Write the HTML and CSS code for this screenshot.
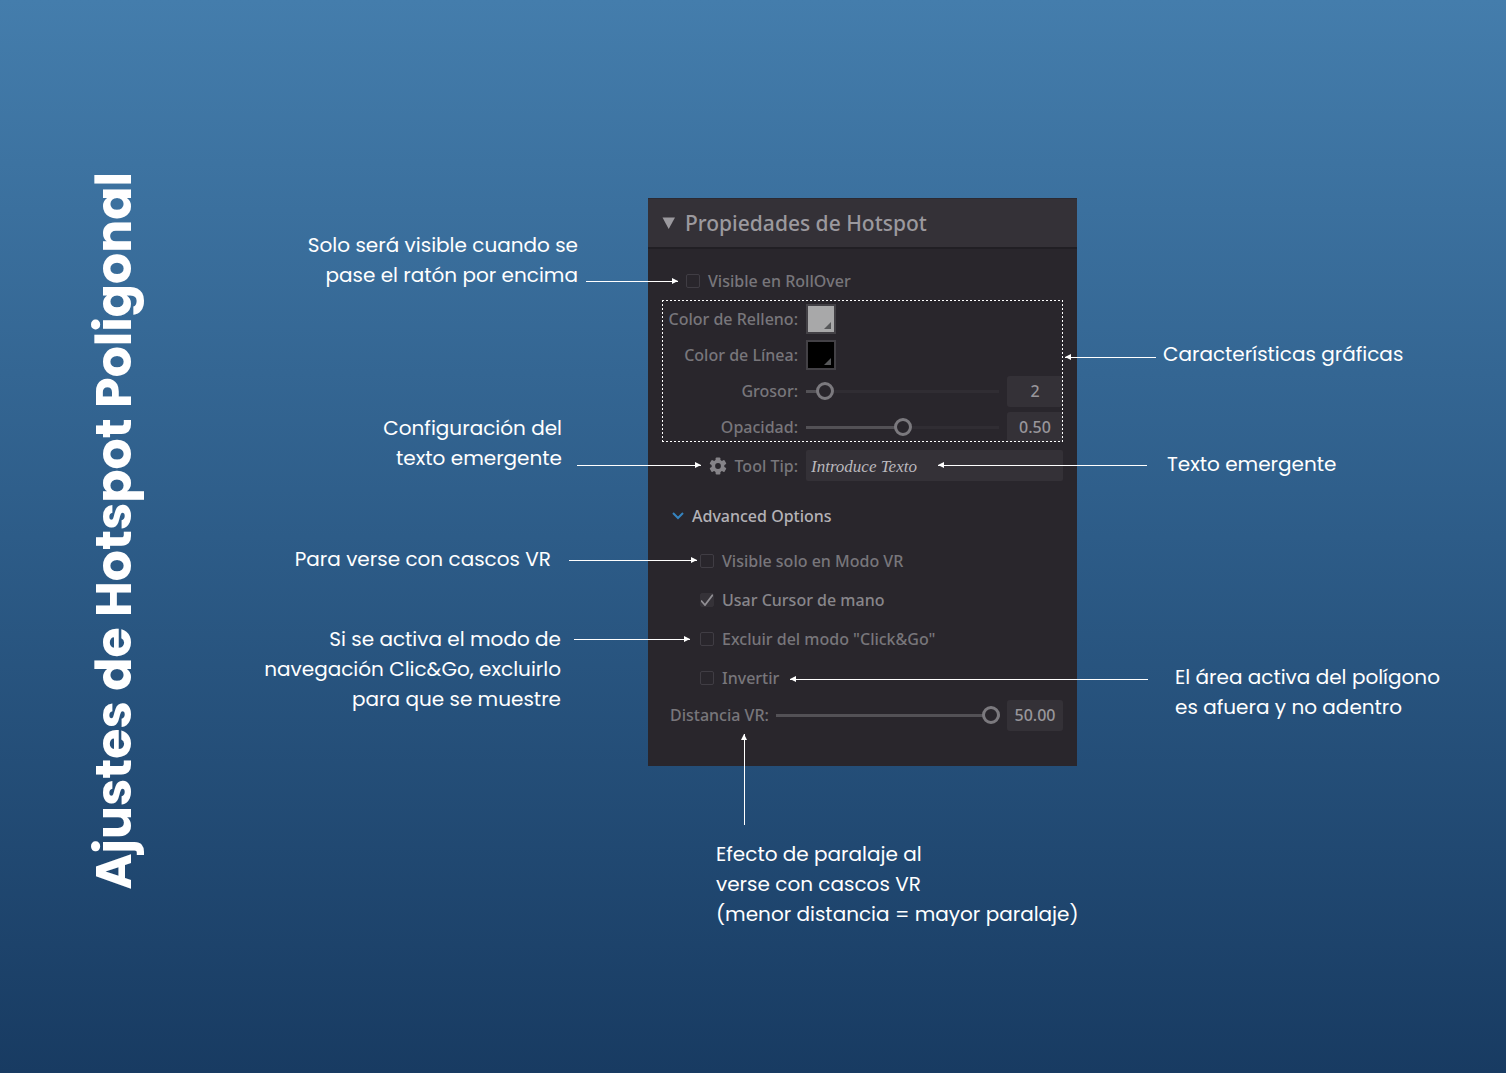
FILE: index.html
```
<!DOCTYPE html>
<html lang="es">
<head>
    <meta charset="UTF-8">
    <meta name="viewport" content="width=device-width, initial-scale=1.0">
    <title>Ajustes de Hotspot Poligonal</title>
    <link rel="stylesheet" href="styles.css">
</head>
<body>

    <main class="slide">
        <h1 class="title">Ajustes de Hotspot Poligonal</h1>

        <!-- Notas de la izquierda -->
        <div class="notes notes-left">
            <div class="note note-rollover">
                <p>Solo será visible cuando se<br>pase el ratón por encima</p>
                <span class="arrow arrow-right"></span>
            </div>
            <div class="note note-config">
                <p>Configuración del<br>texto emergente</p>
                <span class="arrow arrow-right"></span>
            </div>
            <div class="note note-vr">
                <p>Para verse con cascos VR</p>
                <span class="arrow arrow-right"></span>
            </div>
            <div class="note note-click">
                <p>Si se activa el modo de<br>navegación Clic&amp;Go, excluirlo<br>para que se muestre</p>
                <span class="arrow arrow-right"></span>
            </div>
        </div>

        <!-- Panel de propiedades -->
        <section class="panel">
            <h2 class="panel-header">
                <button type="button" class="panel-toggle">
                    <svg width="14" height="12" viewBox="0 0 14 12"><path d="M0.5 0.5h12.5L6.7 12z" fill="currentColor"/></svg>
                    Propiedades de Hotspot
                </button>
            </h2>
            <div class="panel-body">
                <label class="check check-rollover"><input type="checkbox">Visible en RollOver</label>

                <div class="graphics">
                    <div class="row">
                        <label for="fill">Color de Relleno:</label>
                        <button type="button" id="fill" class="swatch swatch-fill"></button>
                    </div>
                    <div class="row">
                        <label for="line">Color de Línea:</label>
                        <button type="button" id="line" class="swatch swatch-line"></button>
                    </div>
                    <div class="row">
                        <label for="width">Grosor:</label>
                        <input type="range" id="width" min="0" max="34" value="2" style="--value: 6%">
                        <input type="text" class="value" value="2" aria-label="Valor de grosor">
                    </div>
                    <div class="row">
                        <label for="opacity">Opacidad:</label>
                        <input type="range" id="opacity" min="0" max="1" step="0.01" value="0.5" style="--value: 50%">
                        <input type="text" class="value" value="0.50" aria-label="Valor de opacidad">
                    </div>
                </div>

                <div class="row row-tip">
                    <div class="tip-label">
                        <button type="button" class="gear" aria-label="Configurar">
                            <svg width="18" height="18" viewBox="0 0 18 18">
                                <g fill="currentColor">
                                    <rect x="6.6" y="0.5" width="4.8" height="17" rx="1"/>
                                    <rect x="6.6" y="0.5" width="4.8" height="17" rx="1" transform="rotate(60 9 9)"/>
                                    <rect x="6.6" y="0.5" width="4.8" height="17" rx="1" transform="rotate(120 9 9)"/>
                                    <circle cx="9" cy="9" r="6.4"/>
                                </g>
                                <circle cx="9" cy="9" r="2.9" fill="#29262c"/>
                            </svg>
                        </button>
                        <label for="tip">Tool Tip:</label>
                    </div>
                    <input type="text" id="tip" class="tip" placeholder="Introduce Texto">
                </div>

                <button type="button" class="advanced">
                    <svg width="12" height="8" viewBox="0 0 12 8"><path d="M1 1l5 5 5-5" fill="none" stroke="#3583bf" stroke-width="2"/></svg>
                    Advanced Options
                </button>

                <div class="options">
                    <label class="check"><input type="checkbox">Visible solo en Modo VR</label>
                    <label class="check check-on"><input type="checkbox" checked>Usar Cursor de mano</label>
                    <label class="check"><input type="checkbox">Excluir del modo "Click&amp;Go"</label>
                    <label class="check"><input type="checkbox">Invertir</label>
                </div>

                <div class="row-distance">
                    <label for="distance">Distancia VR:</label>
                    <input type="range" id="distance" min="0" max="50" value="50" style="--value: 100%">
                    <input type="text" class="value" value="50.00" aria-label="Valor de distancia">
                </div>
            </div>
        </section>

        <!-- Notas de la derecha -->
        <div class="notes notes-right">
            <div class="note note-graphics">
                <span class="arrow arrow-left"></span>
                <p>Características gráficas</p>
            </div>
            <div class="note note-text">
                <span class="arrow arrow-left"></span>
                <p>Texto emergente</p>
            </div>
            <div class="note note-invert">
                <span class="arrow arrow-left"></span>
                <p>El área activa del polígono<br>es afuera y no adentro</p>
            </div>
        </div>

        <div class="note-bottom">
            <span class="arrow-up"></span>
            <p>Efecto de paralaje al<br>verse con cascos VR<br>(menor distancia = mayor paralaje)</p>
        </div>
    </main>

</body>
</html>
```
FILE: styles.css
```
* {
    box-sizing: border-box;
}
body {
    margin: 0;
    min-height: 100vh;
    background: linear-gradient(#447dac, #2d5c88 50%, #183b62);
    color: #fff;
    font-family: Poppins, Inter, sans-serif;
    font-size: 20px;
    line-height: 30px;
}
p {
    margin: 0;
    white-space: nowrap;
}
button, input {
    margin: 0;
    padding: 0;
    border: none;
    background: none;
    color: inherit;
    font: inherit;
}
.slide {
    display: grid;
    grid-template-columns: 200px 1fr 429px 429px;
    grid-template-rows: auto auto;
    padding-top: 198px;
}

/* Título vertical */
.title {
    grid-row: 1 / 3;
    justify-self: center;
    align-self: start;
    margin: -26px 0 0;
    padding-right: 28px;
    writing-mode: vertical-rl;
    transform: rotate(180deg);
    font-size: 49px;
    font-weight: 700;
    line-height: 80px;
    white-space: nowrap;
}

/* Notas */
.note {
    display: flex;
}
.notes-left {
    padding-top: 32px;
    text-align: right;
}
.notes-left .note {
    justify-content: flex-end;
}
.notes-right {
    padding-top: 141px;
}
.notes-left,
.notes-right,
.note-bottom {
    z-index: 1;
    pointer-events: none;
}
.arrow {
    flex: none;
    position: relative;
    height: 1px;
    background: #fff;
}
.arrow::after,
.arrow-up::after {
    content: "";
    position: absolute;
    border: 3px solid transparent;
}
.arrow-right::after {
    right: 0;
    top: -3px;
    border-left: 6px solid #fff;
    border-right: none;
}
.arrow-left::after {
    left: 0;
    top: -3px;
    border-right: 6px solid #fff;
    border-left: none;
}
.note-rollover .arrow {
    width: 92px;
    margin: 51px -30px 0 8px;
}
.note-config {
    margin-top: 123px;
}
.note-config .arrow {
    width: 124px;
    margin: 52px -53px 0 15px;
}
.note-vr {
    margin-top: 71px;
}
.note-vr .arrow {
    width: 128px;
    margin: 16px -49px 0 18px;
}
.note-click {
    margin-top: 50px;
}
.note-click .arrow {
    width: 116px;
    margin: 15px -42px 0 13px;
}
.note-graphics .arrow {
    width: 91px;
    margin: 18px 7px 0 -12px;
}
.note-text {
    margin-top: 80px;
}
.note-text .arrow {
    width: 209px;
    margin: 16px 20px 0 -139px;
}
.note-invert {
    margin-top: 183px;
}
.note-invert .arrow {
    width: 358px;
    margin: 17px 27px 0 -287px;
}
.note-bottom {
    grid-column: 3;
    grid-row: 2;
    margin-top: -32px;
    padding-left: 68px;
}
.arrow-up {
    display: block;
    position: relative;
    width: 1px;
    height: 91px;
    margin: 0 0 14px 28px;
    background: #fff;
}
.arrow-up::after {
    left: -3px;
    top: 0;
    border-bottom: 6px solid #fff;
    border-top: none;
}

/* Panel */
.panel {
    background: #29262c;
    color: #78767b;
    font-family: "Segoe UI", "Noto Sans", sans-serif;
    font-size: 16px;
    font-weight: 500;
    line-height: 22px;
}
.panel-header {
    margin: 0;
    padding: 0 14px;
    background: #343137;
    border-top: 1px solid #2b2a33;
    border-bottom: 2px solid #211f24;
    font-size: 21px;
    font-weight: 500;
}
.panel-toggle {
    display: flex;
    align-items: center;
    gap: 9px;
    height: 48px;
    color: #9b999e;
}
.panel-body {
    padding: 12px 14px 33px;
}
.check {
    display: flex;
    align-items: center;
    gap: 8px;
    height: 39px;
}
.check-rollover {
    padding-left: 24px;
}
.check-on {
    color: #88868b;
}
input[type="checkbox"] {
    appearance: none;
    width: 14px;
    height: 14px;
    border: 1px solid #403d44;
    border-radius: 2px;
}
input[type="checkbox"]:checked {
    border-color: #353238;
    background: #353238 url("data:image/svg+xml,%3Csvg xmlns='http://www.w3.org/2000/svg' viewBox='0 0 14 14'%3E%3Cpath d='M1 7.5l4 4.5L13 1.5' fill='none' stroke='%23908e93' stroke-width='1.8'/%3E%3C/svg%3E") center / 14px;
}
.graphics {
    position: relative;
    height: 142px;
    overflow: hidden;
}
/* borde punteado por encima de los valores */
.graphics::after {
    content: "";
    position: absolute;
    inset: 0;
    background:
        repeating-linear-gradient(90deg, #fff 0 2px, transparent 2px 4px) top / 100% 1px no-repeat,
        repeating-linear-gradient(90deg, #fff 0 2px, transparent 2px 4px) bottom / 100% 1px no-repeat,
        repeating-linear-gradient(#fff 0 2px, transparent 2px 4px) left / 1px 100% no-repeat,
        repeating-linear-gradient(#fff 0 2px, transparent 2px 4px) right / 1px 100% no-repeat;
    pointer-events: none;
}
.row {
    display: grid;
    grid-template-columns: 136px 1fr 56px;
    align-items: center;
    column-gap: 8px;
    height: 36px;
    text-align: right;
}
.graphics .row:first-child {
    height: 37px;
}
.swatch {
    position: relative;
    width: 30px;
    height: 30px;
    border: 2px solid #434146;
}
.swatch::after {
    content: "";
    position: absolute;
    right: 3px;
    bottom: 3px;
    border-left: 7px solid transparent;
    border-bottom: 7px solid #57585a;
}
.swatch-fill {
    background: #a8a8a9;
}
.swatch-line {
    background: #000;
}
input[type="range"] {
    appearance: none;
    width: 100%;
    min-width: 0;
    height: 18px;
    background: linear-gradient(90deg, #535156 var(--value), #302d33 var(--value)) center / 100% 3px no-repeat;
}
input[type="range"]::-webkit-slider-thumb {
    appearance: none;
    width: 18px;
    height: 18px;
    border: 3px solid #7b797e;
    border-radius: 50%;
    background: #29262c;
}
.value {
    width: 56px;
    height: 31px;
    border-radius: 3px;
    background: #343137;
    color: #98969b;
    text-align: center;
}
.row-tip {
    height: 31px;
    margin-top: 8px;
}
.tip-label {
    display: flex;
    align-items: center;
    justify-content: flex-end;
    gap: 8px;
}
.gear {
    display: flex;
    color: #858388;
}
.tip {
    grid-column: 2 / 4;
    width: 100%;
    height: 31px;
    padding: 0 5px;
    border-radius: 2px;
    background: #343137;
}
.tip::placeholder {
    color: #bab8bd;
    font-family: "Liberation Serif", serif;
    font-size: 17px;
    font-style: italic;
    opacity: 1;
}
.advanced {
    display: flex;
    align-items: center;
    gap: 8px;
    height: 30px;
    margin: 20px 0 10px 10px;
    color: #b4b2b7;
}
.options {
    padding-left: 38px;
}
.row-distance {
    display: flex;
    align-items: center;
    gap: 7px;
    height: 36px;
    padding-left: 8px;
    white-space: nowrap;
}
.row-distance .value {
    flex: none;
}
```
